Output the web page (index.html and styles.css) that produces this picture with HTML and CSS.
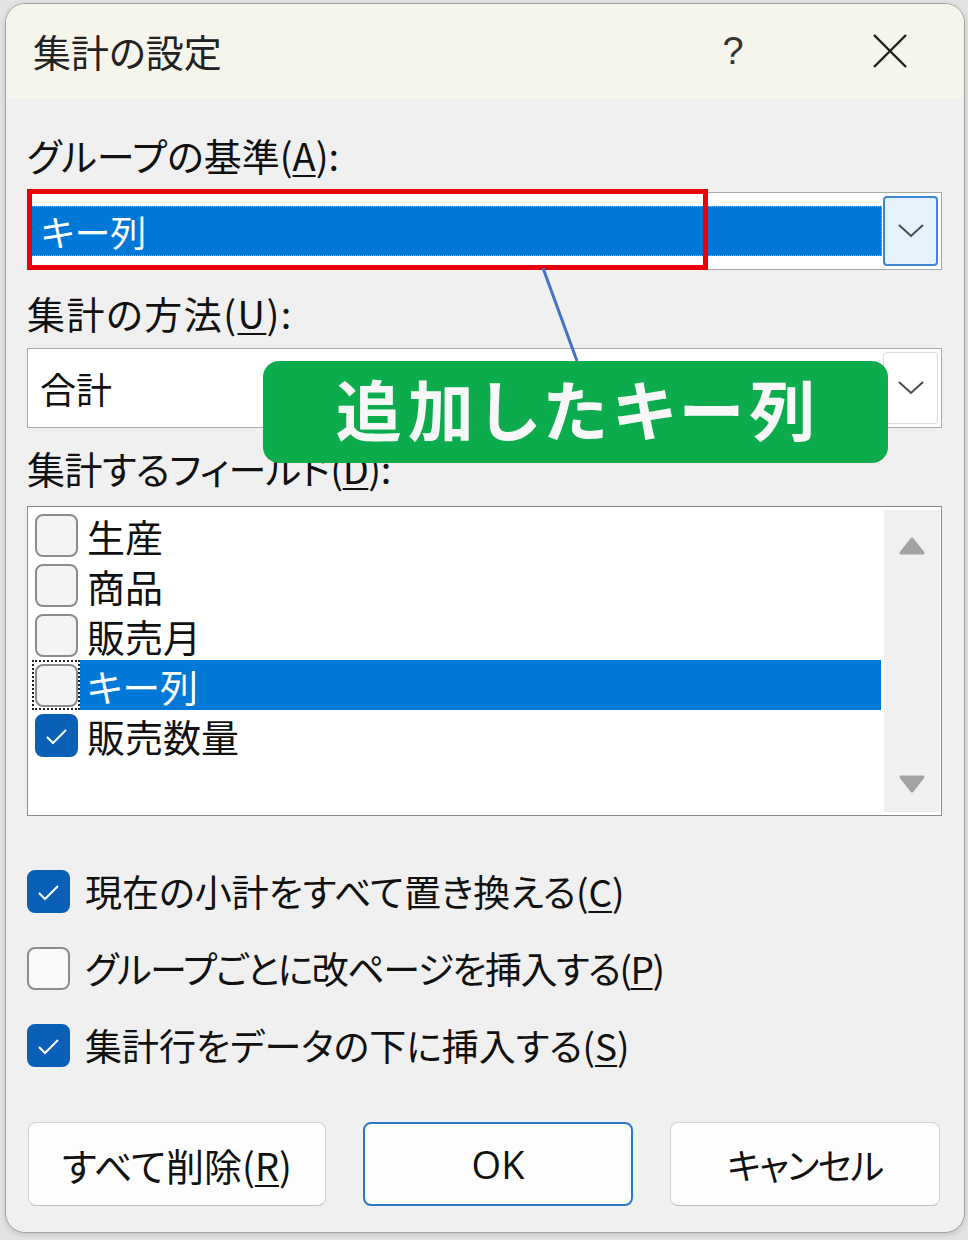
FILE: index.html
```html
<!DOCTYPE html>
<html lang="ja">
<head>
<meta charset="utf-8">
<title>集計の設定</title>
<link rel="stylesheet" href="styles.css">
</head>
<body>
<div class="dialog">
  <div class="titlebar">
    <span class="title">集計の設定</span>
    <span class="help">?</span>
    <span class="close">
      <svg width="36" height="36" viewBox="0 0 36 36"><path d="M2 2 L34 34 M34 2 L2 34" stroke="#1f1f1f" stroke-width="2.4" fill="none"/></svg>
    </span>
  </div>
  <div class="content">
    <div class="label">グループの基準(<u>A</u>):</div>
    <div class="combo">
      <div class="combo-value selected"><span>キー列</span></div>
      <div class="combo-btn active">
        <svg width="26" height="14" viewBox="0 0 26 14"><polyline points="1,1 13,12 25,1" stroke="#4a4a4a" stroke-width="2" fill="none"/></svg>
      </div>
    </div>
    <div class="label l2">集計の方法(<u>U</u>):</div>
    <div class="combo tall">
      <div class="combo-value"><span>合計</span></div>
      <div class="combo-btn">
        <svg width="26" height="14" viewBox="0 0 26 14"><polyline points="1,1 13,12 25,1" stroke="#4a4a4a" stroke-width="2" fill="none"/></svg>
      </div>
    </div>
    <div class="label l3">集計するフィールド(<u>D</u>):</div>
    <div class="listbox">
      <ul class="items">
        <li class="item"><span class="cbwrap"><span class="cb"></span></span><span class="itext">生産</span></li>
        <li class="item"><span class="cbwrap"><span class="cb"></span></span><span class="itext">商品</span></li>
        <li class="item"><span class="cbwrap"><span class="cb"></span></span><span class="itext">販売月</span></li>
        <li class="item sel"><span class="cbwrap focus"><span class="cb"></span></span><span class="itext">キー列</span></li>
        <li class="item"><span class="cbwrap"><span class="cb checked"><svg width="43" height="43" viewBox="0 0 43 43"><polyline points="12,23 18,29 31,16" stroke="#fff" stroke-width="2" fill="none"/></svg></span></span><span class="itext">販売数量</span></li>
      </ul>
      <div class="scrollbar">
        <svg width="28" height="20" viewBox="0 0 28 20"><polygon points="14,3 25,17 3,17" fill="#a3a3a3" stroke="#a3a3a3" stroke-width="3" stroke-linejoin="round"/></svg>
        <svg width="28" height="20" viewBox="0 0 28 20"><polygon points="3,3 25,3 14,17" fill="#a3a3a3" stroke="#a3a3a3" stroke-width="3" stroke-linejoin="round"/></svg>
      </div>
    </div>
    <div class="options">
      <div class="option"><span class="cb checked"><svg width="43" height="43" viewBox="0 0 43 43"><polyline points="12,23 18,29 31,16" stroke="#fff" stroke-width="2" fill="none"/></svg></span><span class="otext">現在の小計をすべて置き換える(<u>C</u>)</span></div>
      <div class="option"><span class="cb plain"></span><span class="otext tight">グループごとに改ページを挿入する(<u>P</u>)</span></div>
      <div class="option"><span class="cb checked"><svg width="43" height="43" viewBox="0 0 43 43"><polyline points="12,23 18,29 31,16" stroke="#fff" stroke-width="2" fill="none"/></svg></span><span class="otext">集計行をデータの下に挿入する(<u>S</u>)</span></div>
    </div>
    <div class="buttons">
      <div class="btn wide">すべて削除(<u>R</u>)</div>
      <div class="btn default">OK</div>
      <div class="btn cancel">キャンセル</div>
    </div>
  </div>
</div>
<div class="redbox"></div>
<svg class="pointer" width="968" height="1240" viewBox="0 0 968 1240"><line x1="543" y1="268" x2="577" y2="361" stroke="#4472c4" stroke-width="3"/></svg>
<div class="callout">追加したキー列</div>
</body>
</html>
```

FILE: styles.css
```css
* { box-sizing: border-box; }
html, body { margin: 0; padding: 0; }
body {
  width: 968px;
  height: 1240px;
  position: relative;
  overflow: hidden;
  background: #e4e4e4;
  font-family: "Noto Sans CJK JP", "Noto Sans", sans-serif;
  color: #111;
  font-feature-settings: "palt";
}
u { text-decoration-thickness: 2px; text-underline-offset: 4px; }

.dialog {
  margin: 3px 0 0 5px;
  width: 960px;
  height: 1230px;
  border: 1px solid #a2a2a2;
  border-radius: 20px;
  background: #f0f0f0;
  overflow: hidden;
  display: flex;
  flex-direction: column;
  box-shadow: 0 2px 6px rgba(0,0,0,0.15);
}

.titlebar {
  height: 94px;
  flex: none;
  background: #f5f5ec;
  display: flex;
  align-items: center;
  padding: 0 34px 0 27px;
}
.title { flex: 1; font-size: 38px; line-height: 40px; color: #222; }
.help {
  width: 60px;
  margin-right: 87px;
  text-align: center;
  font-family: "Liberation Sans", sans-serif;
  font-size: 38px;
  color: #333;
  line-height: 40px;
}
.close { width: 80px; display: flex; justify-content: center; align-items: center; }

.content {
  padding: 37px 22px 0 21px;
  display: flex;
  flex-direction: column;
}
.label { height: 40px; font-size: 38px; line-height: 40px; white-space: nowrap; }
.l2 { margin-top: 23px; letter-spacing: 1.5px; }
.l3 { margin-top: 20px; letter-spacing: -0.5px; }

.combo {
  margin-top: 17px;
  height: 78px;
  border: 1px solid #a9a9a9;
  background: #fff;
  display: flex;
  align-items: center;
  padding: 3px;
  gap: 1px;
}
.combo.tall { height: 80px; margin-top: 15px; }
.combo-value {
  flex: 1;
  height: 50px;
  display: flex;
  align-items: center;
  padding-left: 9px;
  font-size: 36px;
}
.combo-value.selected {
  background: #0078d7;
  color: #fff;
  border: 1px dotted #b8a780;
}
.combo-btn {
  width: 55px;
  height: 100%;
  border: 1px solid #dadada;
  border-radius: 4px;
  background: #fff;
  display: flex;
  align-items: center;
  justify-content: center;
}
.combo-btn.active {
  background: #e5f1fb;
  border: 2px solid #3f87d6;
}

.listbox {
  margin-top: 18px;
  height: 310px;
  border: 1px solid #8a8a8a;
  background: #fff;
  display: flex;
  padding: 3px 1px 3px 0;
}
.items {
  list-style: none;
  margin: 0;
  padding: 0 3px 0 4px;
  flex: 1;
}
.item { height: 50px; display: flex; align-items: stretch; }
.cbwrap {
  width: 48px;
  flex: none;
  display: flex;
  align-items: center;
  justify-content: center;
  border: 2px solid transparent;
}
.cbwrap.focus { border: 2px dotted #222; }
.itext {
  flex: 1;
  display: flex;
  align-items: center;
  padding-left: 7px;
  font-size: 38px;
}
.item.sel .itext { background: #0078d7; color: #fff; }

.cb {
  width: 43px;
  height: 43px;
  flex: none;
  border: 2px solid #8c8c8c;
  border-radius: 8px;
  background: #f4f4f4;
  display: block;
  position: relative;
}
.cb.plain { background: #f9f9f9; }
.cb.checked { background: #0a5fb6; border-color: #0a5fb6; }
.cb svg { position: absolute; left: -2px; top: -2px; }

.scrollbar {
  width: 56px;
  flex: none;
  background: #f0f0f0;
  display: flex;
  flex-direction: column;
  justify-content: space-between;
  align-items: center;
  padding: 26px 0 18px;
}

.options { margin-top: 50px; display: flex; flex-direction: column; gap: 27px; }
.option { height: 50px; display: flex; align-items: center; gap: 15px; }
.otext { font-size: 37px; white-space: nowrap; }
.otext.tight { letter-spacing: -1.5px; }

.buttons {
  margin-top: 52px;
  display: flex;
  gap: 37px;
  padding: 0 2px 0 1px;
}
.btn {
  width: 270px;
  height: 84px;
  background: #fdfdfd;
  border: 1px solid #d2d2d2;
  border-bottom-color: #bdbdbd;
  border-radius: 8px;
  display: flex;
  align-items: center;
  justify-content: center;
  font-size: 38px;
}
.btn.wide { width: 298px; }
.btn.cancel { font-size: 36px; letter-spacing: -1.5px; }
.btn.default { border: 2px solid #2b78c9; font-family: "Open Sans", "Noto Sans CJK JP", sans-serif; }

.redbox {
  position: absolute;
  left: 27px;
  top: 189px;
  width: 681px;
  height: 81px;
  border: 5px solid #e8000b;
}
.pointer { position: absolute; left: 0; top: 0; pointer-events: none; }
.callout {
  position: absolute;
  left: 263px;
  top: 361px;
  width: 625px;
  height: 102px;
  border-radius: 16px;
  background: #0cab4c;
  color: #f7f7f7;
  font-size: 66px;
  font-weight: 700;
  letter-spacing: 6px;
  display: flex;
  align-items: center;
  justify-content: center;
  padding: 0 0 10px 6px;
}
```
